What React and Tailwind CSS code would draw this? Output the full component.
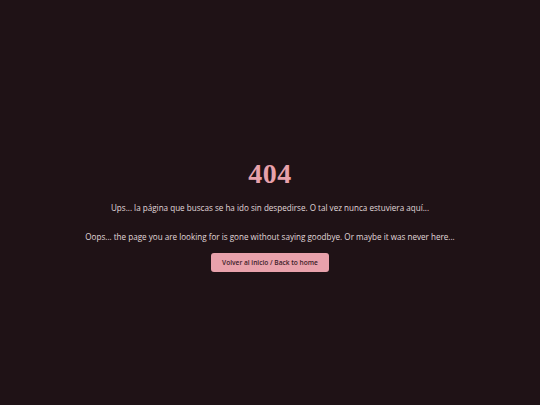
import React from 'react';

const NotFound = () => {
  return (
    <div className="min-h-screen w-full bg-[#1f1216] flex flex-col items-center pt-[158px] font-['Open_Sans',sans-serif]">
      <h1 className="text-[28px] leading-[32px] text-[#e8a1ab] font-['Liberation_Serif',serif] font-bold tracking-[0.5px]">
        404
      </h1>

      <p className="mt-[12px] text-[8.1px] leading-[12px] text-[#e0d8db]">
        Ups... la página que buscas se ha ido sin despedirse. O tal vez nunca estuviera aquí...
      </p>

      <p className="mt-[17px] text-[8.1px] leading-[12px] text-[#e0d8db]">
        Oops... the page you are looking for is gone without saying goodbye. Or maybe it was never here...
      </p>

      <a
        href="#"
        className="mt-[10px] w-[118px] h-[19px] flex items-center justify-center rounded-[3px] bg-[#e8a1ab] text-[#3b2028] text-[6.6px] font-semibold"
      >
        Volver al inicio / Back to home
      </a>
    </div>
  );
};

export default function App() {
  return <NotFound />;
}
